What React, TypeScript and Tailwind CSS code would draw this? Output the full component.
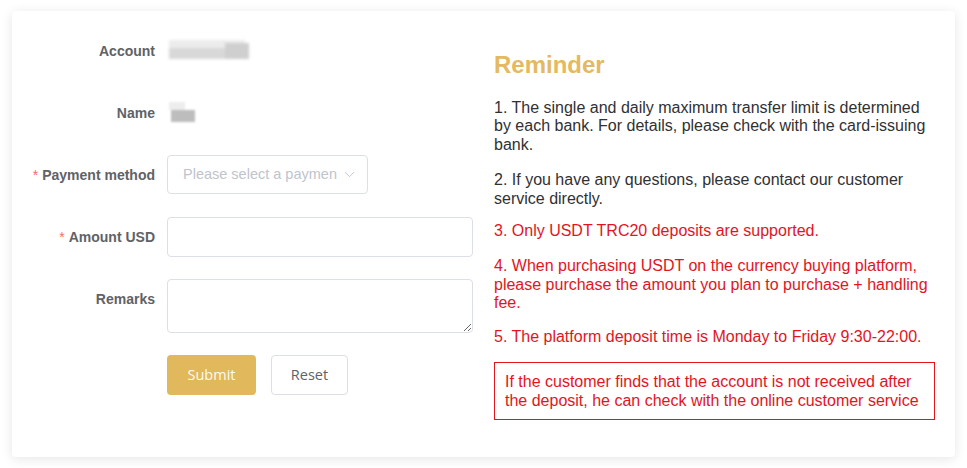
import React from 'react';
import { ChevronDown } from 'lucide-react';

const Label: React.FC<{ text: string; required?: boolean }> = ({ text, required }) => (
  <div className="w-[155px] shrink-0 pr-3 text-right text-[14px] font-bold text-[#606266] leading-[40px]">
    {required && <span className="text-[#f56c6c] font-normal mr-1">*</span>}
    {text}
  </div>
);

const App: React.FC = () => {
  return (
    <div className="w-[967px] h-[468px] bg-white pt-[11px] pl-[12px] font-['Liberation_Sans',Arial,sans-serif]">
      <div className="w-[943px] h-[446px] bg-white rounded-[4px] shadow-[0_2px_12px_0_rgba(0,0,0,0.1)] flex">
        {/* Form */}
        <div className="w-[461px] pt-[20px] flex flex-col gap-[22px]">
          <div className="flex h-[40px]">
            <Label text="Account" />
            <div className="flex items-center">
              <div className="relative w-[90px] h-[22px] ml-[2px] blur-[1.5px]">
                <div className="absolute left-0 top-0 w-[76px] h-[8px] bg-[#ececec]" />
                <div className="absolute left-0 top-[8px] w-[80px] h-[11px] bg-[#d8d8d8]" />
                <div className="absolute left-[56px] top-[3px] w-[24px] h-[16px] bg-[#cfcfcf]" />
              </div>
            </div>
          </div>
          <div className="flex h-[40px]">
            <Label text="Name" />
            <div className="flex items-center">
              <div className="relative w-[40px] h-[22px] blur-[1px]">
                <div className="absolute left-[2px] top-0 w-[16px] h-[8px] bg-[#ededed]" />
                <div className="absolute left-[4px] top-[8px] w-[24px] h-[12px] bg-[#bdbdbd]" />
              </div>
            </div>
          </div>
          <div className="flex h-[40px]">
            <Label text="Payment method" required />
            <div className="w-[201px] h-[39px] border border-[#dcdfe6] rounded-[4px] flex items-center justify-between pl-[15px] pr-[9px]">
              <span className="text-[14.5px] text-[#c0c4cc] whitespace-nowrap overflow-hidden">Please select a paymen</span>
              <ChevronDown size={17} strokeWidth={1.3} className="text-[#c0c4cc] shrink-0" />
            </div>
          </div>
          <div className="flex h-[40px]">
            <Label text="Amount USD" required />
            <input className="w-[306px] h-[40px] border border-[#dcdfe6] rounded-[4px] px-[15px] outline-none" />
          </div>
          <div className="flex h-[54px]">
            <Label text="Remarks" />
            <textarea className="w-[306px] h-[54px] border border-[#dcdfe6] rounded-[4px] px-[15px] py-[5px] outline-none" />
          </div>
          <div className="flex h-[40px] pl-[155px] gap-[15px]">
            <button className="w-[89px] h-[40px] rounded-[4px] bg-[#e2b85c] text-[#fffaf0] text-[14.5px] font-['Open_Sans',sans-serif]">Submit</button>
            <button className="w-[77px] h-[40px] rounded-[4px] bg-white border border-[#dcdfe6] text-[#606266] text-[14.5px] font-['Open_Sans',sans-serif]">Reset</button>
          </div>
        </div>

        {/* Reminder */}
        <div className="ml-[21px] w-[442px] pt-[40px] text-[16px] leading-[18.4px]">
          <h3 className="text-[24px] font-bold text-[#e4b962] leading-[28px] mb-[20px]">Reminder</h3>
          <p className="text-[#303133]">1. The single and daily maximum transfer limit is determined by each bank. For details, please check with the card-issuing bank.</p>
          <p className="text-[#303133] mt-[17px]">2. If you have any questions, please contact our customer service directly.</p>
          <p className="text-[#e3141e] mt-[14px]">3. Only USDT TRC20 deposits are supported.</p>
          <p className="text-[#e3141e] mt-[17px]">4. When purchasing USDT on the currency buying platform, please purchase the amount you plan to purchase + handling fee.</p>
          <p className="text-[#e3141e] mt-[15px]">5. The platform deposit time is Monday to Friday 9:30-22:00.</p>
          <div className="mt-[16px] w-[441px] border border-[#e3141e] text-[#e3141e] px-[10px] py-[9px] leading-[19px]">
            If the customer finds that the account is not received after the deposit, he can check with the online customer service
          </div>
        </div>
      </div>
    </div>
  );
};

export default App;
